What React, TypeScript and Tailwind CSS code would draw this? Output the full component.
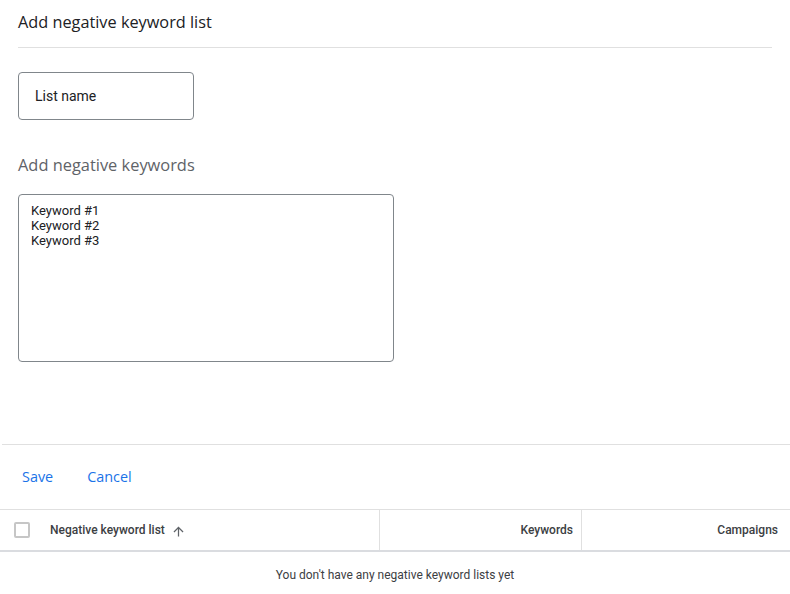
import React from 'react';

const sans = { fontFamily: '"Open Sans", "Noto Sans", sans-serif' };

function ArrowUpIcon() {
  return (
    <svg width="15" height="15" viewBox="0 0 24 24" fill="#5f6368" aria-hidden="true">
      <path d="M4 12l1.41 1.41L11 7.83V20h2V7.83l5.58 5.59L20 12l-8-8-8 8z" />
    </svg>
  );
}

export default function App() {
  return (
    <div className="w-[790px] h-[594px] bg-white overflow-hidden font-['Roboto',sans-serif] text-[#202124]">
      {/* header */}
      <div className="mx-[18px] h-[48px] border-b border-[#e0e0e0] flex items-center pb-[3px]">
        <h1 className="text-[16.3px] font-medium text-[#202124]" style={sans}>
          Add negative keyword list
        </h1>
      </div>

      <div className="px-[18px]">
        <div className="mt-[24px] w-[176px] h-[48px] border border-[#80868b] rounded-[4px] flex items-center pl-[16px] text-[14px] text-[#202124]">
          List name
        </div>

        <h2 className="mt-[33px] h-[24px] leading-[24px] text-[16.4px] text-[#5f6368]" style={sans}>
          Add negative keywords
        </h2>

        <div className="mt-[17px] w-[376px] h-[168px] border border-[#80868b] rounded-[4px] pl-[12px] pt-[8px] text-[13px] leading-[15px] text-[#202124]">
          <div>Keyword #1</div>
          <div>Keyword #2</div>
          <div>Keyword #3</div>
        </div>
      </div>

      {/* actions */}
      <div className="mt-[82px] ml-[2px] border-t border-[#e0e0e0] h-[65px] flex items-center pl-[20px] gap-[34px] text-[14.4px] font-medium text-[#1a73e8]" style={sans}>
        <button className="cursor-pointer">Save</button>
        <button className="cursor-pointer">Cancel</button>
      </div>

      {/* table */}
      <div className="border-t border-[#e0e0e0]">
        <div className="flex h-[42px] border-b-2 border-[#dadce0] text-[12px] font-medium text-[#3c4043]">
          <div className="w-[380px] border-r border-[#e0e0e0] flex items-center pl-[14px]">
            <span className="w-[16px] h-[16px] border-2 border-[#c6c6c6] rounded-[2px]" />
            <span className="ml-[20px]">Negative keyword list</span>
            <span className="ml-[6px] mt-[2px]">
              <ArrowUpIcon />
            </span>
          </div>
          <div className="w-[202px] border-r border-[#e0e0e0] flex items-center justify-end pr-[8px]">
            Keywords
          </div>
          <div className="flex-1 flex items-center justify-end pr-[12px]">Campaigns</div>
        </div>
        <div className="h-[46px] flex items-center justify-center text-[12px] text-[#3c4043]">
          You don't have any negative keyword lists yet
        </div>
      </div>
    </div>
  );
}
